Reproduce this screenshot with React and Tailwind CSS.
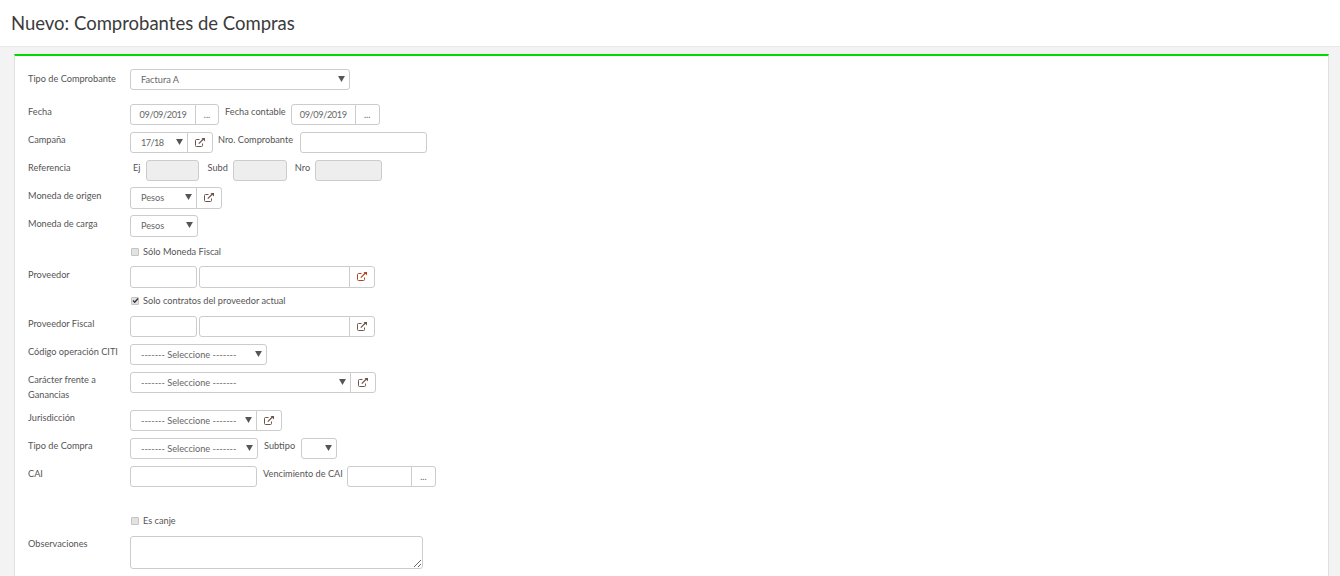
import React from 'react';

const inputCls = 'block h-full bg-white border border-[#ccc] rounded-[3px] outline-none';
const dateCls = 'text-center text-[9.2px] tracking-[-0.4px] text-[#666] rounded-r-none';
const PLACEHOLDER = '------- Seleccione -------';

const Arrow = () => (
  <svg className="absolute right-[5px] top-[7px] w-[7px] h-[6px] fill-[#555]" viewBox="0 0 8 7">
    <path d="M0 0h8L4 7z" />
  </svg>
);

const ExtIcon = ({ color = '#6b5548' }) => (
  <svg width="10" height="9" viewBox="0 0 10 9" fill="none" stroke={color} strokeWidth="1" className="-mt-[1px]">
    <path d="M7.5 5.5v2a1 1 0 0 1-1 1H1.5a1 1 0 0 1-1-1v-5a1 1 0 0 1 1-1h3" />
    <path d="M3.8 5.6L8.4 1" strokeWidth="1.2" />
    <path d="M6.5 0h3.5v3.5z" fill={color} stroke="none" />
  </svg>
);

const Select = ({ value, width, joined, className = '' }) => (
  <div className={`relative h-full ${width}`}>
    <select
      defaultValue={value}
      className={`${inputCls} w-full appearance-none pl-[10px] text-[9.2px] text-[#666] ${joined ? 'rounded-r-none' : ''} ${className}`}
    >
      <option>{value}</option>
    </select>
    <Arrow />
  </div>
);

const Addon = ({ children, width }) => (
  <div className={`h-full ${width} -ml-px bg-white border border-[#ccc] rounded-r-[3px] flex items-center justify-center text-[9.2px] text-[#666]`}>
    {children}
  </div>
);

const Row = ({ label, top, height = 'h-[21px]', labelCls = '', children }) => (
  <div className={`flex items-start ${top}`}>
    <label className={`w-[102px] shrink-0 text-[9.2px] leading-[15px] text-[#555] ${labelCls}`}>{label}</label>
    <div className={`flex items-start ${height}`}>{children}</div>
  </div>
);

const Inline = ({ children, className = '' }) => (
  <span className={`text-[9.2px] leading-[15px] text-[#555] whitespace-nowrap ${className}`}>{children}</span>
);

const Check = ({ label, checked, top }) => (
  <div className={`flex items-center pl-[102px] h-[15px] ${top}`}>
    <span className="w-[8px] h-[8px] mr-[4px] ml-[1px] rounded-[1px] bg-[#e2e2e2] border border-[#c4c4c4] flex items-center justify-center">
      {checked && (
        <svg width="7" height="7" viewBox="0 0 7 7" fill="none" stroke="#333" strokeWidth="1.3" className="shrink-0">
          <path d="M1 3.5l1.7 1.7L6 1.5" />
        </svg>
      )}
    </span>
    <span className="text-[9.2px] text-[#555]">{label}</span>
  </div>
);

export default function App() {
  return (
    <div className="h-[576px] overflow-hidden bg-[#f3f3f4] font-['Lato','Open_Sans',sans-serif]">
      <header className="h-[47px] bg-white border-b border-[#e7eaec] pl-[11px] pt-[10px]">
        <h1 className="text-[18.5px] leading-[26px] text-[#3b3b3b] font-normal">Nuevo: Comprobantes de Compras</h1>
      </header>

      <main className="pl-[14px] pr-[11px] pt-[7px]">
        <div className="bg-white border-t-2 border-t-[#00dc00] border-l border-r border-l-[#e0e0e0] border-r-[#e0e0e0] pl-[13px] pt-[13px] h-[600px]">
          <Row label="Tipo de Comprobante" top="mt-0" labelCls="pt-[2px]">
            <Select value="Factura A" width="w-[220px]" />
          </Row>

          <Row label="Fecha" top="mt-[14px]">
            <input defaultValue="09/09/2019" className={`${inputCls} w-[66px] ${dateCls}`} />
            <Addon width="w-[24px]">...</Addon>
            <Inline className="ml-[6px] mr-[5px]">Fecha contable</Inline>
            <input defaultValue="09/09/2019" className={`${inputCls} w-[65px] ${dateCls}`} />
            <Addon width="w-[25px]">...</Addon>
          </Row>

          <Row label="Campaña" top="mt-[7px]">
            <Select value="17/18" width="w-[58px]" joined className="tracking-[-0.6px]" />
            <Addon width="w-[26px]"><ExtIcon /></Addon>
            <Inline className="ml-[5px] mr-[7px]">Nro. Comprobante</Inline>
            <input className={`${inputCls} w-[127px]`} />
          </Row>

          <Row label="Referencia" top="mt-[7px]">
            <Inline className="ml-[3px] mr-[5px]">Ej</Inline>
            <input disabled className={`${inputCls} w-[53px] !bg-[#eeeeee]`} />
            <Inline className="ml-[9px] mr-[5px]">Subd</Inline>
            <input disabled className={`${inputCls} w-[54px] !bg-[#eeeeee]`} />
            <Inline className="ml-[8px] mr-[5px]">Nro</Inline>
            <input disabled className={`${inputCls} w-[67px] !bg-[#eeeeee]`} />
          </Row>

          <Row label="Moneda de origen" top="mt-[6px]" height="h-[22px]" labelCls="pt-[1px]">
            <Select value="Pesos" width="w-[67px]" joined />
            <Addon width="w-[26px]"><ExtIcon /></Addon>
          </Row>

          <Row label="Moneda de carga" top="mt-[6px]" height="h-[22px]" labelCls="pt-[1px]">
            <Select value="Pesos" width="w-[68px]" />
          </Row>

          <Check label="Sólo Moneda Fiscal" top="mt-[7px]" />

          <Row label="Proveedor" top="mt-[7px]" height="h-[22px]" labelCls="pt-[1px]">
            <input className={`${inputCls} w-[67px]`} />
            <input className={`${inputCls} w-[151px] ml-[2px] rounded-r-none`} />
            <Addon width="w-[26px]"><ExtIcon color="#b5451f" /></Addon>
          </Row>

          <Check label="Solo contratos del proveedor actual" checked top="mt-[5px]" />

          <Row label="Proveedor Fiscal" top="mt-[8px]">
            <input className={`${inputCls} w-[67px]`} />
            <input className={`${inputCls} w-[151px] ml-[2px] rounded-r-none`} />
            <Addon width="w-[26px]"><ExtIcon /></Addon>
          </Row>

          <Row label="Código operación CITI" top="mt-[7px]">
            <Select value={PLACEHOLDER} width="w-[137px]" />
          </Row>

          <Row label="Carácter frente a Ganancias" top="mt-[7px]">
            <Select value={PLACEHOLDER} width="w-[221px]" joined />
            <Addon width="w-[26px]"><ExtIcon /></Addon>
          </Row>

          <Row label="Jurisdicción" top="mt-[8px]">
            <Select value={PLACEHOLDER} width="w-[127px]" joined />
            <Addon width="w-[26px]"><ExtIcon /></Addon>
          </Row>

          <Row label="Tipo de Compra" top="mt-[7px]">
            <Select value={PLACEHOLDER} width="w-[128px]" />
            <Inline className="ml-[6px] mr-[6px]">Subtipo</Inline>
            <Select value="" width="w-[36px]" />
          </Row>

          <Row label="CAI" top="mt-[7px]">
            <input className={`${inputCls} w-[127px]`} />
            <Inline className="ml-[6px] mr-[4px]">Vencimiento de CAI</Inline>
            <input className={`${inputCls} w-[65px] rounded-r-none`} />
            <Addon width="w-[25px]">...</Addon>
          </Row>

          <Check label="Es canje" top="mt-[26px]" />

          <Row label="Observaciones" top="mt-[8px]" height="h-[33px]">
            <textarea className={`${inputCls} w-[293px]`} />
          </Row>
        </div>
      </main>
    </div>
  );
}
